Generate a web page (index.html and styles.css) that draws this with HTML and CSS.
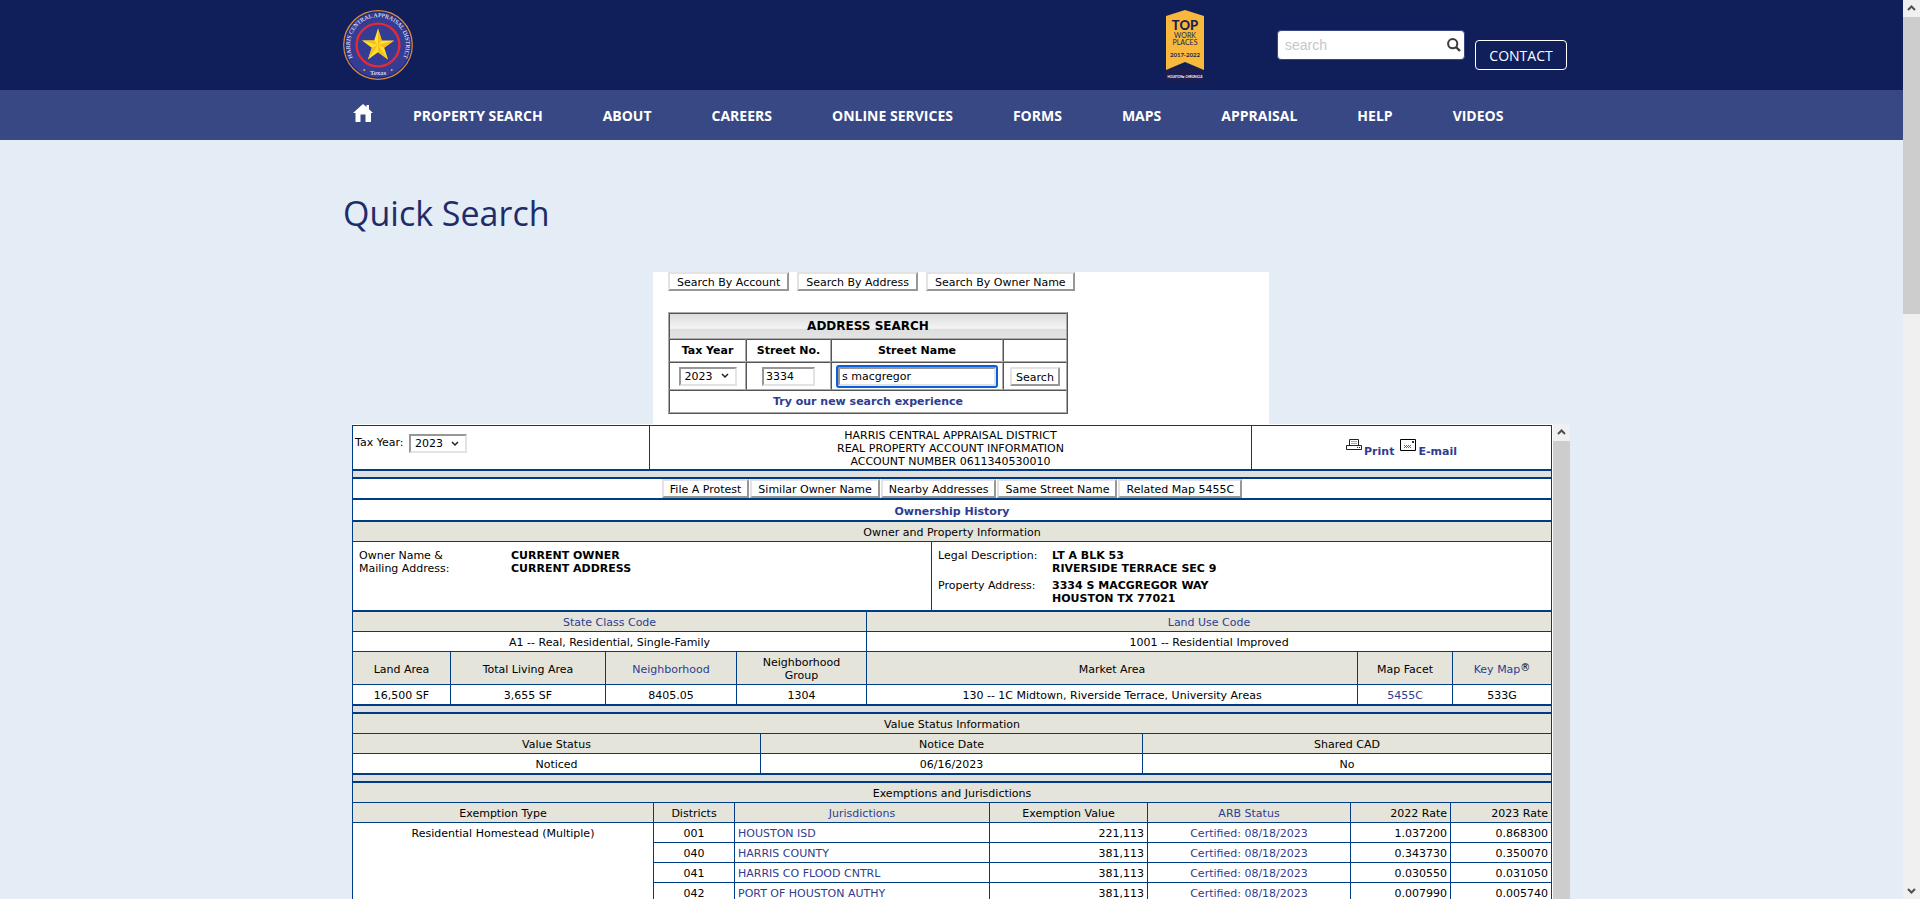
FILE: index.html
```
<!DOCTYPE html>
<html lang="en">
<head>
    <meta charset="UTF-8">
    <meta name="viewport" content="width=device-width, initial-scale=1.0">
    <title>Quick Search - Harris Central Appraisal District</title>
    <link rel="stylesheet" href="styles.css">
</head>
<body>
<div class="page">
    <header class="top">
        <div class="container top-row">
            <a href="#" class="logo" aria-label="Harris Central Appraisal District">
                <svg width="70" height="70" viewBox="0 0 70 70">
                    <defs>
                        <path id="ring" d="M16.5 56.2 A28 28 0 1 1 53.5 56.2"/>
                    </defs>
                    <circle cx="35" cy="35" r="34.3" fill="#343c94" stroke="#dc8a3e" stroke-width="1.2"/>
                    <circle cx="35" cy="35" r="32.9" fill="none" stroke="#1d2568" stroke-width="1"/>
                    <circle cx="35" cy="35" r="21.4" fill="#343c94" stroke="#e12c35" stroke-width="2.4"/>
                    <path d="M35 18.5 L38.8 30.4 L51 30.4 L41.2 37.8 L45 49.5 L35 42.3 L25 49.5 L28.8 37.8 L19 30.4 L31.2 30.4 Z" fill="#ffe32e"/>
                    <path d="M35 18.5 L35 35 L38.8 30.4 Z M51 30.4 L35 35 L41.2 37.8 Z M45 49.5 L35 35 L35 42.3 Z M25 49.5 L35 35 L28.8 37.8 Z M19 30.4 L35 35 L31.2 30.4 Z" fill="#f9bd1c"/>
                    <text class="ring-text" text-anchor="middle"><textPath href="#ring" startOffset="50%">HARRIS CENTRAL APPRAISAL DISTRICT</textPath></text>
                    <text class="ring-low" x="35" y="65" text-anchor="middle">Texas</text>
                    <circle cx="21.3" cy="60" r="1" fill="#d2b53c"/>
                    <circle cx="48.7" cy="60" r="1" fill="#d2b53c"/>
                </svg>
            </a>
            <div class="tools">
                <svg class="award" width="40" height="72" viewBox="0 0 40 72">
                    <path d="M1 58 H39 V71 H1 Z" fill="#1c1e52"/>
                    <path d="M1 6 L20 0 L39 6 V60 L20 52 L1 60 Z" fill="#f8b83c"/>
                    <g text-anchor="middle" fill="#1c1e52">
                        <text class="award-top" x="20" y="20">TOP</text>
                        <text class="award-mid" x="20" y="28">WORK</text>
                        <text class="award-mid" x="20" y="35">PLACES</text>
                        <text class="award-year" x="20" y="47">2017-2022</text>
                    </g>
                    <text class="award-foot" x="20" y="68" text-anchor="middle">HOUSTON★CHRONICLE</text>
                </svg>
                <form class="site-search">
                    <input type="text" placeholder="search" aria-label="search">
                    <button type="button" aria-label="Go">
                        <svg width="14" height="14" viewBox="0 0 14 14"><circle cx="5.7" cy="5.7" r="4.6" fill="none" stroke="#3c3c3c" stroke-width="2"/><path d="M9 9 L13 13" stroke="#3c3c3c" stroke-width="2.4"/></svg>
                    </button>
                </form>
                <button class="contact" type="button">CONTACT</button>
            </div>
        </div>
    </header>

    <nav class="menu">
        <div class="container menu-row">
            <a href="#" class="home" aria-label="Home">
                <svg width="20" height="18" viewBox="0 0 20 18"><path d="M10 0 L13.5 3 V1 H16 V5.3 L20 9 H18 V18 H12.5 V10.5 H7.5 V18 H2.5 V9 H0 Z" fill="#fff"/></svg>
            </a>
            <a href="#">PROPERTY SEARCH</a>
            <a href="#">ABOUT</a>
            <a href="#">CAREERS</a>
            <a href="#">ONLINE SERVICES</a>
            <a href="#">FORMS</a>
            <a href="#">MAPS</a>
            <a href="#">APPRAISAL</a>
            <a href="#">HELP</a>
            <a href="#">VIDEOS</a>
        </div>
    </nav>

    <main class="container">
        <h1>Quick Search</h1>
        <div class="frames">
            <section class="search-frame">
                <div class="search-tabs">
                    <button class="btn" type="button">Search By Account</button>
                    <button class="btn" type="button">Search By Address</button>
                    <button class="btn" type="button">Search By Owner Name</button>
                </div>
                <table class="address">
                    <colgroup><col class="a-year"><col class="a-no"><col class="a-name"><col></colgroup>
                    <tr><th colspan="4" class="address-title">ADDRESS SEARCH</th></tr>
                    <tr class="address-head">
                        <th><label for="year">Tax Year</label></th>
                        <th><label for="stnum">Street No.</label></th>
                        <th><label for="stname">Street Name</label></th>
                        <th></th>
                    </tr>
                    <tr class="address-fields">
                        <td><select id="year" class="year"><option>2023</option></select></td>
                        <td><input id="stnum" class="field stnum" type="text" value="3334"></td>
                        <td><input id="stname" class="field stname" type="text" value="s macgregor"></td>
                        <td><button class="btn" type="button">Search</button></td>
                    </tr>
                    <tr class="address-more"><td colspan="4"><a href="#"><b>Try our new search experience</b></a></td></tr>
                </table>
            </section>

            <section class="result-frame">
                <div class="result">
                    <table class="data">
                        <colgroup><col class="c297"><col class="c602"><col></colgroup>
                        <tr class="thick intro">
                            <td class="tax"><label for="taxyear">Tax Year:</label> <select id="taxyear" class="year"><option>2023</option></select></td>
                            <td>HARRIS CENTRAL APPRAISAL DISTRICT<br>REAL PROPERTY ACCOUNT INFORMATION<br>ACCOUNT NUMBER 0611340530010</td>
                            <td>
                                <div class="links">
                                    <svg width="16" height="12" viewBox="0 0 16 12"><path d="M3.5 6 V0.5 H12.5 V6" fill="#fff" stroke="#222"/><path d="M5 2.5 H11 M5 4.5 H11" stroke="#7ab4e6"/><path d="M0.5 6.5 H15.5 V10.5 H0.5 Z" fill="#fff" stroke="#222"/><path d="M11 8.5 H14" stroke="#222" stroke-dasharray="1 1"/></svg>
                                    <a href="#">Print</a>
                                    <svg class="mail" width="16" height="12" viewBox="0 0 16 12"><path d="M0.5 0.5 H15.5 V11.5 H0.5 Z" fill="#fff" stroke="#000"/><path d="M12 3 H14" stroke="#334" stroke-width="2"/><path d="M4 6.5 H11 M5 7.5 H11 M4 8.5 H11" stroke="#666" stroke-dasharray="1 1"/></svg>
                                    <a href="#">E-mail</a>
                                </div>
                            </td>
                        </tr>
                        <tr class="thick gap"><td colspan="3"></td></tr>
                    </table>
                    <table class="data">
                        <tr class="thick actions"><td>
                            <div class="action-row">
                                <button class="btn" type="button">File A Protest</button>
                                <button class="btn" type="button">Similar Owner Name</button>
                                <button class="btn" type="button">Nearby Addresses</button>
                                <button class="btn" type="button">Same Street Name</button>
                                <button class="btn" type="button">Related Map 5455C</button>
                            </div>
                        </td></tr>
                        <tr class="thick history"><td><a href="#"><b>Ownership History</b></a></td></tr>
                    </table>
                    <table class="data">
                        <colgroup><col class="c579"><col></colgroup>
                        <tr class="head"><th colspan="2">Owner and Property Information</th></tr>
                        <tr class="thick owner">
                            <td><dl class="pairs">
                                <dt>Owner Name &amp;<br>Mailing Address:</dt><dd>CURRENT OWNER<br>CURRENT ADDRESS</dd>
                            </dl></td>
                            <td><dl class="pairs legal">
                                <dt>Legal Description:</dt><dd>LT A BLK 53<br>RIVERSIDE TERRACE SEC 9</dd>
                                <dt>Property Address:</dt><dd>3334 S MACGREGOR WAY<br>HOUSTON TX 77021</dd>
                            </dl></td>
                        </tr>
                    </table>
                    <table class="data">
                        <colgroup><col class="c98"><col class="c155"><col class="c131"><col class="c130"><col class="c491"><col class="c95"><col></colgroup>
                        <tr class="head"><th colspan="4"><a href="#">State Class Code</a></th><th colspan="3"><a href="#">Land Use Code</a></th></tr>
                        <tr><td colspan="4">A1 -- Real, Residential, Single-Family</td><td colspan="3">1001 -- Residential Improved</td></tr>
                        <tr class="head">
                            <th>Land Area</th><th>Total Living Area</th><th><a href="#">Neighborhood</a></th><th>Neighborhood<br>Group</th>
                            <th>Market Area</th><th>Map Facet</th><th><a href="#">Key Map</a><sup>&reg;</sup></th>
                        </tr>
                        <tr class="thick">
                            <td>16,500 SF</td><td>3,655 SF</td><td>8405.05</td><td>1304</td>
                            <td>130 -- 1C Midtown, Riverside Terrace, University Areas</td><td><a href="#">5455C</a></td><td>533G</td>
                        </tr>
                        <tr class="thick gap"><td colspan="7"></td></tr>
                    </table>
                    <table class="data">
                        <colgroup><col class="c408"><col class="c382"><col></colgroup>
                        <tr class="head"><th colspan="3">Value Status Information</th></tr>
                        <tr class="head"><th>Value Status</th><th>Notice Date</th><th>Shared CAD</th></tr>
                        <tr class="thick"><td>Noticed</td><td>06/16/2023</td><td>No</td></tr>
                        <tr class="thick gap"><td colspan="3"></td></tr>
                    </table>
                    <table class="data exempt">
                        <colgroup><col class="c301"><col class="c81"><col class="c255"><col class="c158"><col class="c203"><col class="c100"><col></colgroup>
                        <tr class="head"><th colspan="7">Exemptions and Jurisdictions</th></tr>
                        <tr class="head">
                            <th>Exemption Type</th><th>Districts</th><th><a href="#">Jurisdictions</a></th><th>Exemption Value</th>
                            <th><a href="#">ARB Status</a></th><th class="num">2022 Rate</th><th class="num">2023 Rate</th>
                        </tr>
                        <tr><td rowspan="4" class="type">Residential Homestead (Multiple)</td><td>001</td><td class="name"><a href="#">HOUSTON ISD</a></td><td class="num">221,113</td><td><a href="#">Certified: 08/18/2023</a></td><td class="num">1.037200</td><td class="num">0.868300</td></tr>
                        <tr><td>040</td><td class="name"><a href="#">HARRIS COUNTY</a></td><td class="num">381,113</td><td><a href="#">Certified: 08/18/2023</a></td><td class="num">0.343730</td><td class="num">0.350070</td></tr>
                        <tr><td>041</td><td class="name"><a href="#">HARRIS CO FLOOD CNTRL</a></td><td class="num">381,113</td><td><a href="#">Certified: 08/18/2023</a></td><td class="num">0.030550</td><td class="num">0.031050</td></tr>
                        <tr><td>042</td><td class="name"><a href="#">PORT OF HOUSTON AUTHY</a></td><td class="num">381,113</td><td><a href="#">Certified: 08/18/2023</a></td><td class="num">0.007990</td><td class="num">0.005740</td></tr>
                    </table>
                </div>
                <div class="scrollbar">
                    <svg class="arrow" width="17" height="17" viewBox="0 0 17 17"><path d="M5 10 L8.5 6.5 L12 10" fill="none" stroke="#505050" stroke-width="2"/></svg>
                    <div class="thumb thumb-full"></div>
                </div>
            </section>
        </div>
    </main>
</div>
<div class="scrollbar">
    <svg class="arrow" width="17" height="17" viewBox="0 0 17 17"><path d="M5 10 L8.5 6.5 L12 10" fill="none" stroke="#505050" stroke-width="2"/></svg>
    <div class="thumb"></div>
    <svg class="arrow arrow-down" width="17" height="17" viewBox="0 0 17 17"><path d="M5 7 L8.5 10.5 L12 7" fill="none" stroke="#505050" stroke-width="2"/></svg>
</div>
</body>
</html>
```
FILE: styles.css
```
* {
    box-sizing: border-box;
}
body {
    margin: 0;
    display: flex;
    height: 100vh;
    overflow: hidden;
    background: #e4ecf6;
    font-family: "Open Sans", sans-serif;
    color: #000;
}
a {
    color: #2e3c92;
    text-decoration: none;
}
.page {
    flex: 1;
    min-width: 0;
    overflow: hidden;
}
.container {
    max-width: 1231px;
    margin: 0 auto;
    padding-left: 7px;
}

/* header */
.top {
    background: #101e5a;
}
.top-row {
    display: flex;
    justify-content: space-between;
    height: 90px;
    padding-top: 10px;
}
.logo svg {
    display: block;
}
.ring-text {
    font: 6px "Liberation Serif", serif;
    fill: #fff;
}
.ring-low {
    font: 7px "Liberation Serif", serif;
    fill: #fff;
}
.tools {
    display: flex;
    align-items: flex-start;
}
.award {
    margin-right: 72px;
}
.award-top {
    font: 900 13px Lato, sans-serif;
}
.award-mid {
    font: 7px Lato, sans-serif;
}
.award-year {
    font: bold 6px Lato, sans-serif;
}
.award-foot {
    font: bold 3px Lato, sans-serif;
    fill: #fff;
}
.site-search {
    display: flex;
    align-items: center;
    width: 188px;
    height: 30px;
    margin: 20px 10px 0 0;
    padding: 0 3px 0 7px;
    background: #fff;
    border: 1px solid #384884;
    border-radius: 4px;
}
.site-search input {
    flex: 1;
    min-width: 0;
    padding: 0;
    border: 0;
    outline: 0;
    font: 14px "Liberation Sans", sans-serif;
}
.site-search input::placeholder {
    color: #c6c6ce;
}
.site-search button {
    padding: 0;
    border: 0;
    background: none;
}
.site-search svg {
    display: block;
}
.contact {
    width: 92px;
    height: 30px;
    margin-top: 30px;
    padding: 0;
    background: none;
    border: 1px solid #fff;
    border-radius: 4px;
    color: #fff;
    font: 14px "Open Sans", sans-serif;
}

/* menu */
.menu {
    background: #384884;
}
.menu-row {
    display: flex;
    align-items: center;
    height: 50px;
}
.menu a {
    padding: 0 30px;
    color: #fff;
    font-size: 14px;
    font-weight: bold;
}
.menu .home {
    padding: 0 10px 4px 10px;
}
.home svg {
    display: block;
}

h1 {
    margin: 48px 0 34px;
    font-size: 34px;
    line-height: 50px;
    font-weight: normal;
    color: #202c68;
}
.frames {
    margin: 0 -3px 0 9px;
    font: 11px/13px "DejaVu Sans", Verdana, sans-serif;
}

/* old style form controls */
.btn,
.year,
.field {
    font: 11px/13px "DejaVu Sans", Verdana, sans-serif;
    color: #000;
    background-color: #fff;
    border-radius: 0;
}
.btn {
    padding: 2px 4px 0;
    border: 2px solid;
    border-color: #e3e3e3 #979797 #979797 #e3e3e3;
}
.year {
    appearance: none;
    width: 58px;
    height: 19px;
    padding: 0 4px;
    border: 2px solid;
    border-color: #979797 #e3e3e3 #e3e3e3 #979797;
    background-image: url("data:image/svg+xml,%3Csvg xmlns='http://www.w3.org/2000/svg' width='8' height='6'%3E%3Cpath d='M1 1 L4 4 L7 1' fill='none' stroke='%23222' stroke-width='1.5'/%3E%3C/svg%3E");
    background-repeat: no-repeat;
    background-position: right 6px center;
}
.field {
    height: 19px;
    padding: 0 2px;
    border: 2px solid;
    border-color: #979797 #e3e3e3 #e3e3e3 #979797;
}

/* search box */
.search-frame {
    width: 616px;
    height: 152px;
    margin: 0 auto;
    padding-left: 15px;
    background: #fff;
}
.search-tabs {
    display: flex;
    gap: 8px;
    margin-bottom: 21px;
}
.search-tabs .btn {
    padding: 2px 7px 0;
}
.address {
    width: 400px;
    table-layout: fixed;
    border-spacing: 0;
    border: 1px solid;
    border-color: #aaa #555 #555 #aaa;
}
.address th,
.address td {
    padding: 0;
    border: 1px solid;
    border-color: #555 #aaa #aaa #555;
    text-align: center;
}
.a-year {
    width: 77px;
}
.a-no {
    width: 85px;
}
.a-name {
    width: 172px;
}
.address-title {
    height: 26px;
    font-size: 12px;
    background: linear-gradient(#dcdcdc, #f4f4f4 60%, #dedede 62%, #e4e4e4);
}
.address-head th {
    height: 23px;
}
.address-fields td {
    height: 28px;
}
.address-more td {
    height: 23px;
}
.stnum {
    width: 53px;
}
.stname {
    width: 158px;
    outline: 2px solid #0a5fdc;
    border-radius: 1px;
}

/* account details */
.result-frame {
    display: flex;
    background: #fff;
}
.result {
    flex: 1;
    padding: 1px 1px 0 0;
}
.data {
    width: 100%;
    table-layout: fixed;
    border-spacing: 0;
    border-left: 1px solid #003c86;
}
.data:first-child {
    border-top: 1px solid #003c86;
}
.data th,
.data td {
    padding: 4px 3px 2px;
    border: solid #003c86;
    border-width: 0 1px 1px 0;
    font-weight: normal;
    text-align: center;
}
.data .thick td {
    border-bottom-width: 2px;
}
.data .head th {
    background: #e4e4da;
}
.data .gap td {
    height: 8px;
    padding: 0;
    background: #dfdfdf;
}
.data .intro td {
    padding: 3px 2px 1px;
}
.data .intro .tax {
    padding-top: 7px;
    text-align: left;
    vertical-align: top;
}
.tax label {
    margin-right: 2px;
}
.links {
    display: flex;
    justify-content: center;
    align-items: flex-start;
    gap: 2px;
    font-weight: bold;
}
.links a {
    padding-top: 6px;
}
.links .mail {
    margin-left: 4px;
}
.data .actions td {
    height: 21px;
    padding: 0;
}
.action-row {
    display: flex;
    justify-content: center;
    gap: 1px;
}
.action-row .btn {
    padding: 2px 6px 0;
}
.data .history td {
    height: 22px;
}
.data .owner td {
    height: 70px;
    padding: 7px 6px 5px;
    vertical-align: top;
    text-align: left;
}
.pairs {
    display: grid;
    grid-template-columns: 152px 1fr;
    row-gap: 4px;
    margin: 0;
}
.legal {
    grid-template-columns: 114px 1fr;
}
.pairs dd {
    margin: 0;
    font-weight: bold;
}
sup {
    font-size: 10px;
    line-height: 0;
    vertical-align: 2px;
}
.data .num {
    text-align: right;
}
.data .name {
    text-align: left;
}
.data .type {
    vertical-align: top;
}
.c297 { width: 297px; }
.c602 { width: 602px; }
.c579 { width: 579px; }
.c98 { width: 98px; }
.c155 { width: 155px; }
.c131 { width: 131px; }
.c130 { width: 130px; }
.c491 { width: 491px; }
.c95 { width: 95px; }
.c408 { width: 408px; }
.c382 { width: 382px; }
.c301 { width: 301px; }
.c81 { width: 81px; }
.c255 { width: 255px; }
.c158 { width: 158px; }
.c203 { width: 203px; }
.c100 { width: 100px; }

/* selects sit in the middle of their text line */
.tax .year {
    margin-top: 1px;
    vertical-align: middle;
}

/* scrollbars */
.scrollbar {
    display: flex;
    flex-direction: column;
    width: 17px;
    background: #f0f0f0;
}
.arrow {
    flex: none;
    display: block;
}
.thumb {
    height: 33%;
    background: #cdcdcd;
}
.thumb-full {
    height: auto;
    flex: 1;
}
.arrow-down {
    margin-top: auto;
}
```
